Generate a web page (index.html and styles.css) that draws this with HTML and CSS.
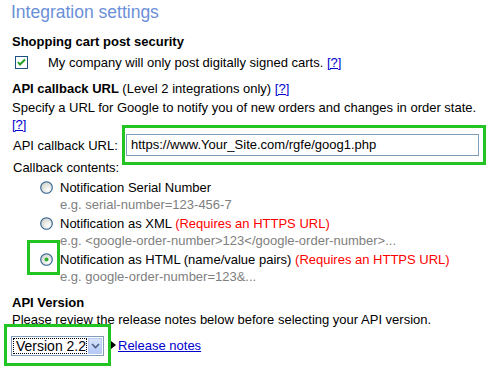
FILE: index.html
```html
<!DOCTYPE html>
<html>
<head>
<meta charset="utf-8">
<link rel="stylesheet" href="styles.css">
</head>
<body>
<div class="page">
  <h1 class="title">Integration settings</h1>

  <div class="heading h-cart">Shopping cart post security</div>
  <div class="check-row">
    <span class="checkbox">
      <svg width="13" height="13" viewBox="0 0 13 13"><rect x="0.5" y="0.5" width="12" height="12" fill="#fff" stroke="#1c5180"/><path d="M3 6 L5 8.5 L10 3.5" fill="none" stroke="#21a121" stroke-width="2"/></svg>
    </span>
    <span>My company will only post digitally signed carts. <a href="#">[?]</a></span>
  </div>

  <div class="heading h-api"><b>API callback URL</b> <span class="normal">(Level 2 integrations only)</span> <a href="#">[?]</a></div>
  <div class="line specify">Specify a URL for Google to notify you of new orders and changes in order state.</div>
  <div class="line"><a href="#">[?]</a></div>

  <div class="url-row">
    <span class="label">API callback URL:</span>
    <div class="hl hl-url"><div class="input">https://www.Your_Site.com/rgfe/goog1.php</div></div>
  </div>

  <div class="line cb-label">Callback contents:</div>

  <div class="options">
    <div class="opt">
      <span class="radio"><svg width="13" height="13" viewBox="0 0 13 13"><defs><radialGradient id="g1" cx="0.65" cy="0.7" r="0.7"><stop offset="0" stop-color="#ffffff"/><stop offset="1" stop-color="#d4d4cc"/></radialGradient></defs><circle cx="6.5" cy="6.5" r="5.8" fill="url(#g1)" stroke="#2c5f8f" stroke-width="1.1"/></svg></span>
      <div class="opt-text">
        <div class="line">Notification Serial Number</div>
        <div class="line eg">e.g. serial-number=123-456-7</div>
      </div>
    </div>
    <div class="opt">
      <span class="radio"><svg width="13" height="13" viewBox="0 0 13 13"><circle cx="6.5" cy="6.5" r="5.8" fill="url(#g1)" stroke="#2c5f8f" stroke-width="1.1"/></svg></span>
      <div class="opt-text">
        <div class="line">Notification as XML <span class="req">(Requires an HTTPS URL)</span></div>
        <div class="line eg">e.g. &lt;google-order-number&gt;123&lt;/google-order-number&gt;...</div>
      </div>
    </div>
    <div class="opt opt-sel">
      <span class="radio"><svg width="13" height="13" viewBox="0 0 13 13"><circle cx="6.5" cy="6.5" r="5.8" fill="url(#g1)" stroke="#2c5f8f" stroke-width="1.1"/><circle cx="6.5" cy="6.5" r="2" fill="#2fb12f"/></svg></span>
      <div class="hl hl-radio"></div>
      <div class="opt-text">
        <div class="line">Notification as HTML (name/value pairs) <span class="req">(Requires an HTTPS URL)</span></div>
        <div class="line eg">e.g. google-order-number=123&amp;...</div>
      </div>
    </div>
  </div>

  <div class="heading h-ver">API Version</div>
  <div class="line">Please review the release notes below before selecting your API version.</div>

  <div class="ver-row">
    <div class="hl hl-select">
      <div class="select">
        <span class="sel-text">Version 2.2</span>
        <span class="sel-btn"><svg width="9" height="6" viewBox="0 0 9 6"><path d="M1 1 L4.5 4.5 L8 1" fill="none" stroke="#4d6185" stroke-width="1.6"/></svg></span>
      </div>
    </div>
    <span class="tri"></span>
    <a href="#" class="rel">Release notes</a>
  </div>
</div>
</body>
</html>
```

FILE: styles.css
```css
* { box-sizing: border-box; }
html, body { margin: 0; padding: 0; background: #fff; }
body {
  font-family: "Liberation Sans", Arial, sans-serif;
  font-size: 13px;
  color: #000;
  width: 490px;
  height: 389px;
  overflow: hidden;
}
a { color: #0000cc; text-decoration: underline; }
.page { padding: 0 0 0 12px; }
.title {
  margin: 0 0 0 -1px;
  font-size: 17.5px;
  font-weight: normal;
  color: #6b8fd8;
  line-height: 24px;
}
.line { line-height: 17px; height: 17px; white-space: nowrap; }
.heading { font-weight: bold; line-height: 17px; height: 17px; white-space: nowrap; }
.heading .normal, .heading a { font-weight: normal; }
.h-cart { margin-top: 9px; }
.check-row {
  display: flex;
  align-items: center;
  height: 22px;
  line-height: 17px;
  margin-top: 1px;
}
.checkbox { display: flex; width: 13px; height: 13px; margin-left: 3px; margin-right: 20px; }
.h-api { margin-top: 7px; }
.h-api b { font-weight: bold; }
.specify { margin-top: 2px; }
.url-row {
  display: flex;
  align-items: center;
  margin-top: -8px;
  height: 40px;
}
.label { width: 110px; padding-left: 1px; }
.hl { border: 3px solid #21c421; }
.hl-url {
  width: 364px;
  height: 40px;
  padding: 6px 4px 6px 1px;
}
.input {
  height: 22px;
  border: 1px solid #7f9db9;
  padding-left: 4px;
  line-height: 20px;
  white-space: nowrap;
}
.cb-label { margin-top: -6px; padding-left: 1px; }
.options { padding-left: 28px; margin-top: 3px; }
.opt { display: flex; position: relative; margin-bottom: 2px; }
.radio { display: flex; width: 13px; height: 13px; margin-top: 2px; margin-right: 7px; }
.eg { color: #808080; }
.req { color: #ff0000; }
.hl-radio {
  position: absolute;
  left: -13px;
  top: -11px;
  width: 33px;
  height: 35px;
}
.h-ver { margin-top: 9px; }
.ver-row {
  display: flex;
  align-items: center;
  margin-left: -8px;
  margin-top: -4px;
}
.hl-select {
  width: 107px;
  height: 42px;
  padding: 9px 4px 7px 4px;
}
.select {
  display: flex;
  height: 20px;
  width: 93px;
  border: 1px solid #7f9db9;
  padding: 1px;
}
.sel-text {
  flex: 1;
  border: 1px dotted #000;
  line-height: 14px;
  font-size: 14px;
  padding-left: 2px;
  background: #fff;
  white-space: nowrap;
}
.sel-btn {
  width: 16px;
  margin-left: 1px;
  background: linear-gradient(#d6e2fb, #b5c9f7);
  border: 1px solid #b9c9ef;
  display: flex;
  align-items: center;
  justify-content: center;
}
.tri {
  width: 0; height: 0;
  border-top: 4px solid transparent;
  border-bottom: 4px solid transparent;
  border-left: 5px solid #000;
  margin-left: 0;
  margin-right: 2px;
}
.rel { line-height: 17px; }
```
